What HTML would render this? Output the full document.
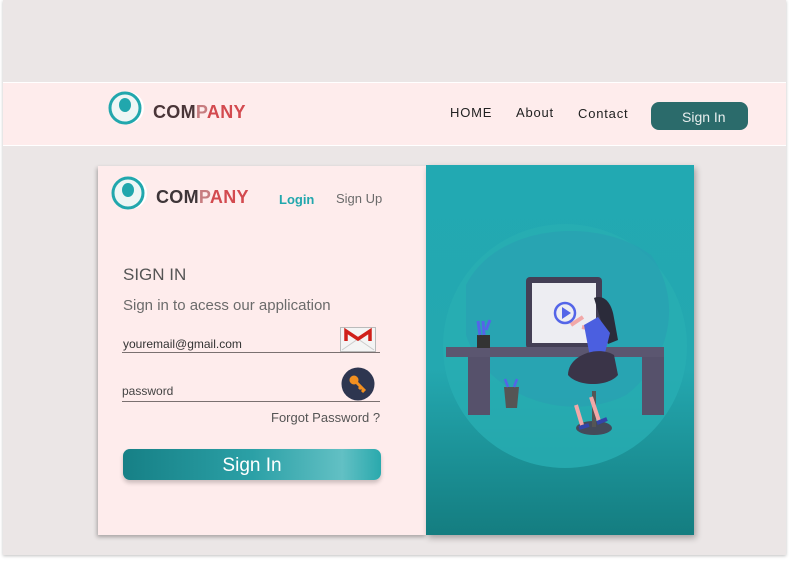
<!DOCTYPE html>
<html><head><style>
*{margin:0;padding:0;box-sizing:border-box}
body{width:789px;height:566px;background:#fff;font-family:"Liberation Sans",sans-serif;position:relative;overflow:hidden}
.bg{position:absolute;left:3px;top:0;width:783px;height:555px;background:#ebe6e6;box-shadow:0 1px 3px rgba(0,0,0,.25)}
.hdr{position:absolute;left:3px;top:82px;width:783px;height:64px;background:#feecec;border-top:1px solid #fff;border-bottom:1px solid #fff}
.abs{position:absolute}
.logo{font-weight:bold;font-size:18px;letter-spacing:.3px}
.nav{font-size:13px;color:#222;letter-spacing:.8px}
.card{position:absolute;left:98px;top:166px;width:328px;height:369px;background:#feecec;box-shadow:-1px 2px 4px rgba(0,0,0,.3)}
.right{position:absolute;left:426px;top:165px;width:268px;height:370px;background:linear-gradient(#22a9b2 0%,#24a8b0 55%,#147d80 100%);box-shadow:2px 3px 6px rgba(0,0,0,.3)}
.gray{color:#6b6b6b}
</style></head><body>
<div class="bg"></div>
<div class="hdr"></div>
<svg class="abs" style="left:108px;top:90px" width="40" height="36"><ellipse cx="20" cy="18" rx="16" ry="16" fill="#fff"/><circle cx="17" cy="18" r="15" fill="#eef6f5" stroke="#21a7ad" stroke-width="3"/><ellipse cx="17" cy="15" rx="6" ry="7" fill="#21a7ad"/></svg>
<div class="abs logo" style="left:153px;top:102px"><span style="color:#4a3538">COM</span><span style="color:#c77d80">P</span><span style="color:#d34a4f">ANY</span></div>
<div class="abs nav" style="left:450px;top:105px">HOME</div>
<div class="abs nav" style="left:516px;top:105px">About</div>
<div class="abs nav" style="left:578px;top:106px">Contact</div>
<div class="abs" style="left:651px;top:102px;width:97px;height:28px;background:#2b6b6b;border-radius:8px;color:#e8eeee;font-size:14px;padding-left:31px;padding-top:7px">Sign In</div>

<div class="card"></div>
<svg class="abs" style="left:111px;top:175px" width="40" height="36"><ellipse cx="20" cy="18" rx="16" ry="16" fill="#fff"/><circle cx="17" cy="18" r="15" fill="#eef6f5" stroke="#21a7ad" stroke-width="3"/><ellipse cx="17" cy="15" rx="6" ry="7" fill="#21a7ad"/></svg>
<div class="abs logo" style="left:156px;top:187px"><span style="color:#3e3538">COM</span><span style="color:#c77d80">P</span><span style="color:#d34a4f">ANY</span></div>
<div class="abs" style="left:279px;top:192px;font-size:13px;font-weight:bold;color:#21a7ad">Login</div>
<div class="abs gray" style="left:336px;top:191px;font-size:13px">Sign Up</div>
<div class="abs" style="left:123px;top:265px;font-size:17px;color:#555">SIGN IN</div>
<div class="abs gray" style="left:123px;top:297px;font-size:15px">Sign in to acess our application</div>
<div class="abs" style="left:123px;top:337px;font-size:12px;color:#333">youremail@gmail.com</div>
<div class="abs" style="left:122px;top:352px;width:258px;height:1px;background:#7a7070"></div>
<svg class="abs" style="left:340px;top:327px" width="36" height="25"><rect x=".5" y=".5" width="35" height="24" fill="#f4f4f4" stroke="#bbb"/><path d="M2 23 L18 12 L34 23" stroke="#ccc" fill="none"/><path d="M6 14 V4 L18 12 L30 4 V14" stroke="#d0201a" stroke-width="3.5" fill="none"/></svg>
<div class="abs" style="left:122px;top:384px;font-size:12px;color:#444">password</div>
<div class="abs" style="left:122px;top:401px;width:258px;height:1px;background:#7a7070"></div>
<svg class="abs" style="left:341px;top:367px" width="34" height="34"><circle cx="17" cy="17" r="16.5" fill="#2e3650"/><circle cx="13" cy="13" r="4.5" fill="#f39020"/><path d="M15 15 L24 24 M20 20 L18 22 M23 23 L21 25" stroke="#f39020" stroke-width="3"/></svg>
<div class="abs gray" style="left:271px;top:410px;font-size:13px;color:#555">Forgot Password ?</div>
<div class="abs" style="left:123px;top:449px;width:258px;height:31px;border-radius:7px;background:linear-gradient(90deg,#168086,#2ba0a6 50%,#62c0c4 85%,#2aa9ad);box-shadow:0 3px 4px rgba(0,0,0,.2);color:#fff;font-size:19px;text-align:center;padding-top:6px">Sign In</div>

<div class="right"></div>
<svg class="abs" style="left:426px;top:165px" width="268" height="370">
<circle cx="139" cy="181" r="122" fill="#28aeb3" opacity=".8"/>
<path d="M40 120 C70 60 170 50 225 90 C260 140 240 200 200 230 C140 260 60 230 40 170 Z" fill="#2a9fb3" opacity=".6"/>
<rect x="100" y="112" width="76" height="72" rx="4" fill="#443f55"/>
<rect x="106" y="118" width="64" height="60" fill="#ededf2"/>
<circle cx="139" cy="148" r="10" fill="none" stroke="#5465e8" stroke-width="2.5"/>
<path d="M136 142 L145 148 L136 154 Z" fill="#5465e8"/>
<rect x="20" y="182" width="218" height="10" fill="#5b5670"/>
<rect x="42" y="192" width="22" height="58" fill="#56516b"/>
<rect x="216" y="192" width="22" height="58" fill="#56516b"/>
<rect x="51" y="170" width="13" height="13" fill="#333"/>
<path d="M54 170 L52 156 M58 170 L57 156 M60 165 L64 155" stroke="#5465e8" stroke-width="3"/>
<path d="M78 222 h15 l-2 21 h-11z" fill="#555"/>
<path d="M82 222 l-3 -8 M88 222 l3 -8" stroke="#5465e8" stroke-width="2.5"/>
<ellipse cx="168" cy="263" rx="18" ry="7" fill="#444a5a"/>
<rect x="166" y="226" width="4" height="36" fill="#555"/>
<path d="M168 133 c10 -4 18 5 20 20 l4 22 -10 4 z" fill="#2b2b3a"/>
<path d="M145 160 l12 -8 M172 165 l-16 -3" stroke="#f2a8a8" stroke-width="4"/>
<path d="M158 160 l14 -8 12 16 -6 24 h-14z" fill="#4b5fe0"/>
<path d="M150 240 l6 20 M165 232 l8 24" stroke="#f2a8a8" stroke-width="4"/>
<path d="M142 210 c0 -20 30 -30 46 -20 l4 20 c-10 12 -40 12 -50 0z" fill="#3a3448"/>
<path d="M153 263 l10 -3 M171 258 l10 -4" stroke="#3344aa" stroke-width="4"/>
</svg>
</body></html>
